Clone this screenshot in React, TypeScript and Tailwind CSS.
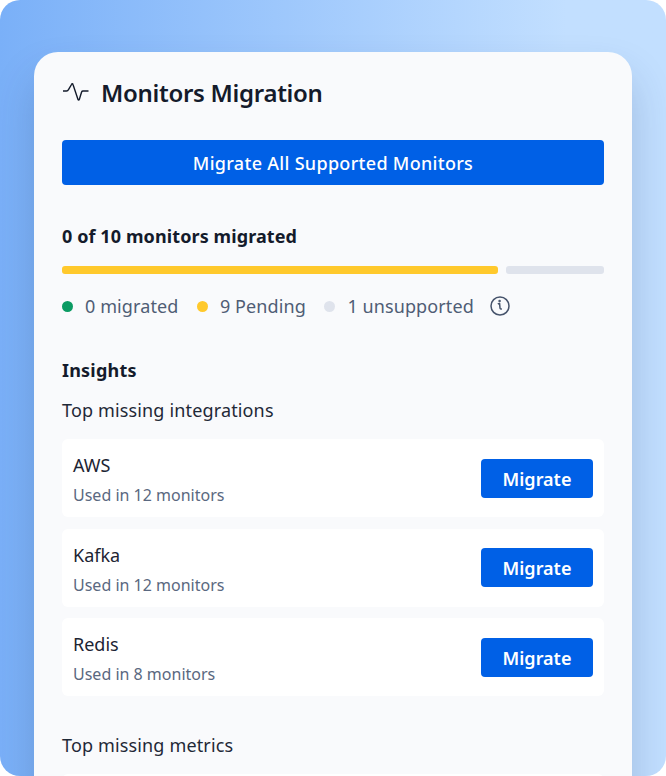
import React from "react";

const integrations = [
  { name: "AWS", usage: "Used in 12 monitors" },
  { name: "Kafka", usage: "Used in 12 monitors" },
  { name: "Redis", usage: "Used in 8 monitors" },
];

const legend = [
  { label: "0 migrated", dot: "bg-[#0b9b63]" },
  { label: "9 Pending", dot: "bg-[#ffc92c]" },
  { label: "1 unsupported", dot: "bg-[#dfe3ec]" },
];

const App = () => {
  return (
    <div className="h-[776px] w-[666px] overflow-hidden bg-white font-['Noto_Sans',sans-serif]">
      <div className="h-full overflow-hidden rounded-[20px] bg-gradient-to-r from-[#7ab0f8] to-[#c2dfff] to-85% px-[34px] pt-[52px]">
        <div className="h-[800px] rounded-t-[24px] bg-[#f9fafc] px-7 pt-[24px] shadow-[0_24px_40px_rgba(30,60,110,0.22)]">
          <div className="flex h-[34px] items-center">
            <svg width="28" height="24" viewBox="0 0 28 24" fill="none" stroke="#141b2b" strokeWidth="1.4" className="mr-[11px] shrink-0">
              <path d="M1 10h3.5c1 0 1.6-.4 2-1.4l3-5.1c.4-1 1.2-1 1.5 0l5 15c.3.8 1 .8 1.3 0l2.3-7.5c.3-.8.7-1 1.4-1h5.5" />
            </svg>
            <h1 className="text-2xl font-semibold leading-[34px] tracking-[-0.3px] text-[#141b2b]">Monitors Migration</h1>
          </div>

          <button className="mt-[30px] flex h-[45px] w-full items-center justify-center rounded-[4px] bg-[#0060e6] pt-[2px] text-[18px] font-medium tracking-[0.3px] text-white">
            Migrate All Supported Monitors
          </button>

          <div className="mt-[39px] text-[18px] font-bold leading-6 tracking-[0.1px] text-[#141b2b]">0 of 10 monitors migrated</div>

          <div className="mt-[18px] flex gap-2">
            <div className="h-2 w-[436px] rounded-[3px] bg-[#ffc92c]" />
            <div className="h-2 flex-1 rounded-[3px] bg-[#dfe3ec]" />
          </div>

          <div className="mt-5 flex h-6 items-center text-[18px] tracking-[0.1px] text-[#4f5d75]">
            {legend.map((item) => (
              <div key={item.label} className="mr-[18.5px] flex items-center">
                <span className={`mr-3 h-[11px] w-[11px] rounded-full ${item.dot}`} />
                <span>{item.label}</span>
              </div>
            ))}
            <svg width="20" height="20" viewBox="0 0 20 20" fill="none" stroke="#46536b" strokeWidth="1.5" className="-ml-[2px]">
              <circle cx="10" cy="10" r="9" />
              <path d="M7.8 8c.7-.4 1.3-.5 1.8-.4l.4 4.4c.1.9.7 1.1 1.8.7" />
              <circle cx="9.6" cy="5" r=".5" fill="#46536b" />
            </svg>
          </div>

          <h2 className="mt-10 text-[18px] font-bold leading-6 tracking-[0.2px] text-[#141b2b]">Insights</h2>
          <div className="mt-4 text-[18px] leading-6 tracking-[0.15px] text-[#1f2937]">Top missing integrations</div>

          <div className="mt-[17px] flex flex-col gap-[11.5px]">
            {integrations.map((item) => (
              <div key={item.name} className="flex h-[78px] items-center justify-between rounded-[6px] bg-white px-[11px]">
                <div className="pt-[2px]">
                  <div className="text-[18px] leading-6 text-[#1c2433]">{item.name}</div>
                  <div className="mt-2 text-base leading-5 text-[#5a6880]">{item.usage}</div>
                </div>
                <button className="h-[39px] w-[112px] rounded-[4px] bg-[#0060e6] pt-[2px] text-[18px] font-semibold text-white">Migrate</button>
              </div>
            ))}
          </div>

          <div className="mt-[37px] text-[18px] leading-6 tracking-[0.15px] text-[#1f2937]">Top missing metrics</div>
          <div className="mt-[17px] h-[78px] rounded-[6px] bg-white" />
        </div>
      </div>
    </div>
  );
};

export default App;
